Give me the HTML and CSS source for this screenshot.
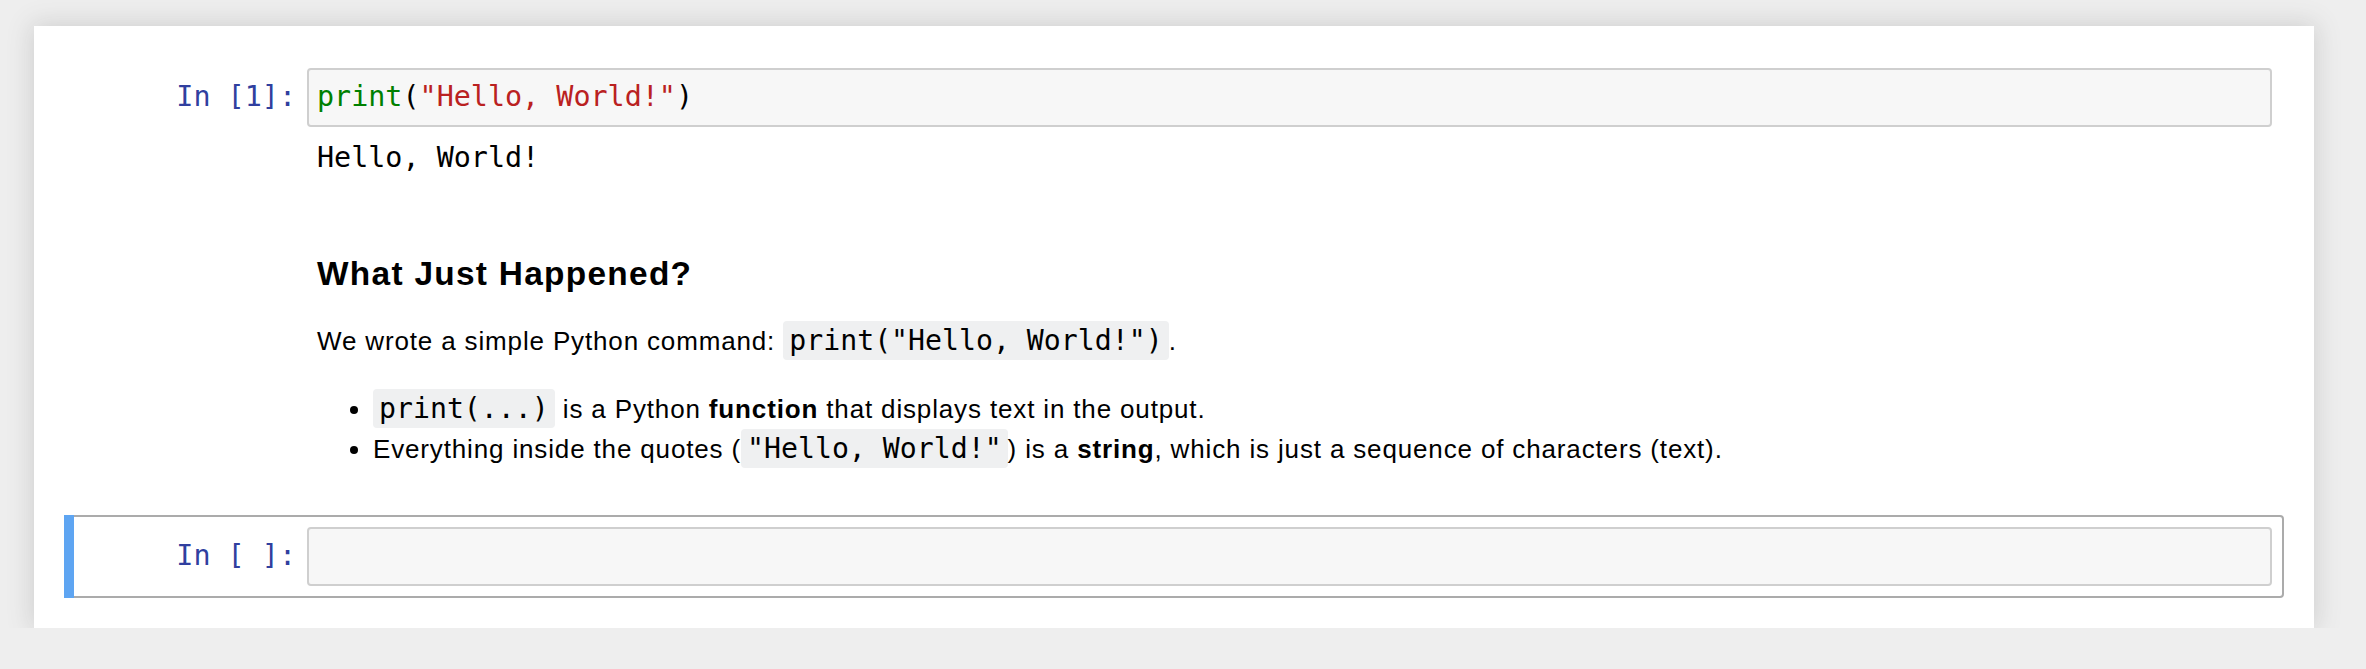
FILE: index.html
```html
<!DOCTYPE html>
<html lang="en">
<head>
<meta charset="utf-8">
<title>Notebook</title>
<link rel="stylesheet" href="styles.css">
</head>
<body>
<div class="notebook">
  <div class="cell">
    <div class="row">
      <div class="prompt">In [1]:</div>
      <div class="input-area"><span class="builtin">print</span>(<span class="str">"Hello, World!"</span>)</div>
    </div>
    <div class="row output">
      <div class="prompt"></div>
      <pre class="output-text">Hello, World!</pre>
    </div>
  </div>
  <div class="cell">
    <div class="row">
      <div class="prompt"></div>
      <div class="md">
        <h3>What Just Happened?</h3>
        <p>We wrote a simple Python command: <code>print("Hello, World!")</code>.</p>
        <ul>
          <li><code>print(...)</code> is a Python <strong>function</strong> that displays text in the output.</li>
          <li>Everything inside the quotes (<code>"Hello, World!"</code>) is a <strong>string</strong>, which is just a sequence of characters (text).</li>
        </ul>
      </div>
    </div>
  </div>
  <div class="cell selected">
    <div class="row">
      <div class="prompt">In [ ]:</div>
      <div class="input-area"></div>
    </div>
  </div>
</div>
</body>
</html>
```
FILE: styles.css
```css
html, body {
  margin: 0;
}
body {
  background: #eeeeee;
  padding: 26px 0 0 34px;
  font-family: "Liberation Sans", Arial, sans-serif;
}
.notebook {
  width: 2280px;
  box-sizing: border-box;
  padding: 30px;
  background: #ffffff;
  box-shadow: 0 0 24px 2px rgba(87, 87, 87, 0.2);
}
.cell {
  position: relative;
  border: 2px solid transparent;
  border-radius: 4px;
  padding: 10px;
}
.cell.selected {
  border-color: #ababab;
}
.cell.selected::before {
  content: "";
  position: absolute;
  top: -2px;
  bottom: -2px;
  left: -2px;
  width: 10px;
  background: #5ea5f2;
}
.row {
  display: flex;
  align-items: flex-start;
}
.prompt {
  flex: none;
  width: 231px;
  box-sizing: border-box;
  padding: 12px 11px 0 0;
  text-align: right;
  font-family: "DejaVu Sans Mono", monospace;
  font-size: 28.4px;
  line-height: 34px;
  color: #303f9f;
  white-space: pre;
}
.input-area {
  flex: 1;
  min-height: 34px;
  border: 2px solid #cfcfcf;
  border-radius: 4px;
  background: #f7f7f7;
  padding: 10px 8px 11px;
  font-family: "DejaVu Sans Mono", monospace;
  font-size: 28.4px;
  line-height: 34px;
  color: #000;
  white-space: pre;
}
.builtin {
  color: #008000;
}
.str {
  color: #ba2121;
}
.output {
  padding: 14px 0 11px;
}
.output .prompt {
  padding-top: 0;
}
.output-text {
  margin: 0;
  padding-left: 10px;
  font-family: "DejaVu Sans Mono", monospace;
  font-size: 28.4px;
  line-height: 34px;
  color: #000;
}
.md {
  flex: 1;
  padding: 13px 13px 13px 10px;
  font-size: 26px;
  color: #000;
  letter-spacing: 0.85px;
}
.md h3 {
  margin: 31px 0 0;
  font-size: 33.4px;
  line-height: 40px;
  font-weight: bold;
  letter-spacing: 1.3px;
}
.md p {
  margin: 28px 0 0;
  line-height: 37px;
}
.md ul {
  margin: 29px 0 21px;
  padding-left: 56px;
  line-height: 39px;
}
.md code {
  font-family: "DejaVu Sans Mono", monospace;
  font-size: 28.2px;
  letter-spacing: 0;
  padding: 3px 6px;
  background: #eff0f1;
  border-radius: 4px;
}
.md strong {
  font-weight: bold;
}
```
